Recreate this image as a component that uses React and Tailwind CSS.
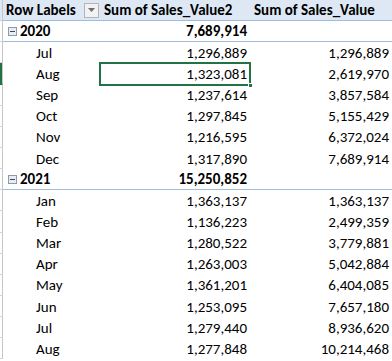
import React from "react";

const rows = [
  { type: "year", label: "2020", b: "7,689,914", c: "" },
  { type: "month", label: "Jul", b: "1,296,889", c: "1,296,889" },
  { type: "month", label: "Aug", b: "1,323,081", c: "2,619,970", selected: true },
  { type: "month", label: "Sep", b: "1,237,614", c: "3,857,584" },
  { type: "month", label: "Oct", b: "1,297,845", c: "5,155,429" },
  { type: "month", label: "Nov", b: "1,216,595", c: "6,372,024" },
  { type: "month", label: "Dec", b: "1,317,890", c: "7,689,914" },
  { type: "year", label: "2021", b: "15,250,852", c: "" },
  { type: "month", label: "Jan", b: "1,363,137", c: "1,363,137" },
  { type: "month", label: "Feb", b: "1,136,223", c: "2,499,359" },
  { type: "month", label: "Mar", b: "1,280,522", c: "3,779,881" },
  { type: "month", label: "Apr", b: "1,263,003", c: "5,042,884" },
  { type: "month", label: "May", b: "1,361,201", c: "6,404,085" },
  { type: "month", label: "Jun", b: "1,253,095", c: "7,657,180" },
  { type: "month", label: "Jul", b: "1,279,440", c: "8,936,620" },
  { type: "month", label: "Aug", b: "1,277,848", c: "10,214,468" },
];

const CollapseBox = () => (
  <span className="flex items-center justify-center w-[9px] h-[9px] border border-[#8a9bb0] bg-[#e8edf3] mr-[3px]">
    <span className="block w-[5px] h-px bg-[#3b4a5c]" />
  </span>
);

const FilterButton = () => (
  <span className="flex items-center justify-center w-[15px] h-[15px] border border-[#b4b4b4] bg-[#f2f2f2] ml-auto mr-[1px]">
    <svg width="7" height="4" viewBox="0 0 7 4">
      <path d="M0 0 H7 L3.5 4 Z" fill="#6d6d6d" />
    </svg>
  </span>
);

const RowGutter = ({ selected }) => (
  <div
    className={`w-[3px] shrink-0 h-full border-r border-[#c6c6c6] border-b ${
      selected ? "bg-[#217346] border-b-[#217346]" : "border-b-[#d4d4d4]"
    }`}
  />
);

export default function App() {
  return (
    <div
      className="w-[392px] h-[361px] overflow-hidden bg-white text-black text-[15px] leading-none"
      style={{ fontFamily: "Carlito, Lato, 'Liberation Sans', sans-serif" }}
    >
      {/* header */}
      <div className="flex h-[21.15px] bg-[#dde8f4] font-bold">
        <RowGutter />
        <div className="flex flex-1 items-center border-b border-[#9bbde0]">
          <div className="w-[97px] flex items-center pl-[3px]">
            <span className="pt-[1px]">Row Labels</span>
            <FilterButton />
          </div>
          <div className="w-[150px] pl-[4px] pt-[1px] whitespace-nowrap">Sum of Sales_Value2</div>
          <div className="w-[142px] pl-[4px] pt-[1px] whitespace-nowrap">Sum of Sales_Value</div>
        </div>
      </div>

      {rows.map((r, i) => (
        <div key={i} className="flex h-[21.15px]">
          <RowGutter selected={r.selected} />
          <div
            className={`flex flex-1 items-center pt-[1px] ${
              r.type === "year" ? "font-bold border-b border-[#9bbde0]" : ""
            }`}
          >
            <div className="w-[97px] flex items-center">
              {r.type === "year" ? (
                <span className="flex items-center pl-[5px]">
                  <CollapseBox />
                  {r.label}
                </span>
              ) : (
                <span className="pl-[33px]">{r.label}</span>
              )}
            </div>
            <div className="w-[150px] h-full relative flex items-center justify-end pr-[3px]">
              {r.selected && (
                <div className="absolute -top-[2px] -left-[1px] right-[-1px] -bottom-[1px] border-2 border-[#217346]">
                  <div className="absolute -right-[4px] -bottom-[4px] w-[5px] h-[5px] bg-[#217346] border border-white" />
                </div>
              )}
              {r.b}
            </div>
            <div className="w-[142px] flex justify-end pr-[3px]">{r.c}</div>
          </div>
        </div>
      ))}
    </div>
  );
}
